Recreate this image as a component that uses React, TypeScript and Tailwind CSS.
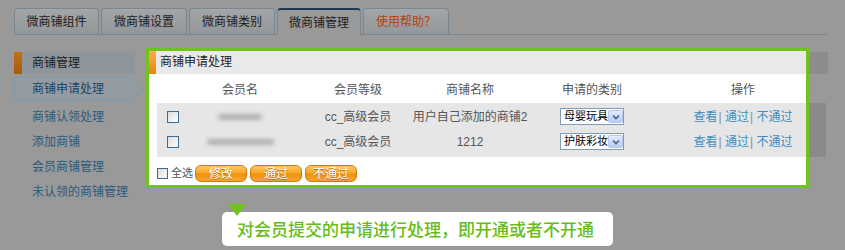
import React from "react";

const tabs = ["微商铺组件", "微商铺设置", "微商铺类别", "微商铺管理", "使用帮助？"];
const sideItems = ["商铺认领处理", "添加商铺", "会员商铺管理", "未认领的商铺管理"];

const rows = [
    { blur: "w-[44px]", level: "cc_高级会员", shop: "用户自己添加的商铺2", cat: "母婴玩具" },
    { blur: "w-[67px]", level: "cc_高级会员", shop: "1212", cat: "护肤彩妆" },
];

function Checkbox({ size = "w-[12px] h-[12px]" }: { size?: string }) {
    return (
        <span
            className={`${size} block border border-[#3f6b93] bg-[linear-gradient(135deg,#dcdcdc,#ffffff)]`}
        />
    );
}

function Select({ label }: { label: string }) {
    return (
        <div className="w-[64px] h-[17px] border border-[#7f9db9] bg-white flex items-center justify-between">
            <span className="pl-[3px] text-[11px] leading-none text-black whitespace-nowrap">{label}</span>
            <span className="w-[15px] h-[13px] mr-[1px] shrink-0 rounded-[2px] border border-[#b6c7ee] bg-[linear-gradient(to_bottom,#e3ebfd,#b9cbf4)] flex items-center justify-center">
                <svg width="8" height="6" viewBox="0 0 8 6">
                    <path d="M1 1.5 L4 4.5 L7 1.5" fill="none" stroke="#4a5f86" strokeWidth="1.6" />
                </svg>
            </span>
        </div>
    );
}

function OrangeButton({ label }: { label: string }) {
    return (
        <button className="w-[52px] h-[17px] rounded-[6px] border border-[#cd7b08] bg-[linear-gradient(to_bottom,#fdc868,#f6a623_48%,#ef900c_52%,#f5a733)] text-white text-[12px] leading-none [text-shadow:0_1px_0_#c46d00]">
            {label}
        </button>
    );
}

export default function App() {
    return (
        <div className="w-[845px] h-[250px] bg-[#999999] overflow-hidden font-['Liberation_Sans','Noto_Sans_CJK_SC',sans-serif]">
            {/* Tabs */}
            <div className="pt-[8px] ml-[14px] mr-[18px] flex items-end border-b border-[#7b8790]">
                {tabs.map((t, i) => {
                    const active = i === 3;
                    return (
                        <div
                            key={t}
                            className={
                                active
                                    ? "w-[84px] h-[27px] -mb-px mr-[2px] rounded-t-[4px] border-x border-[#7b8790] border-t-2 border-t-[#1d3652] bg-[#999999] flex items-center justify-center text-[12px] text-[#1c1c1c]"
                                    : `${i === 0 ? "w-[85px]" : "w-[86px]"} h-[26px] mr-[2px] rounded-t-[4px] border border-b-0 border-[#7b8790] bg-[linear-gradient(to_bottom,#a2a6a9,#93979a)] flex items-center justify-center text-[12px] ${i === 4 ? "text-[#b2440c]" : "text-[#1c1c1c]"}`
                            }
                        >
                            {t}
                        </div>
                    );
                })}
            </div>

            {/* Main area */}
            <div className="mt-[13px] flex">
                {/* Sidebar */}
                <div className="w-[146px] pl-[14px] pt-[4px] shrink-0">
                    <div className="w-[121px] h-[22px] flex bg-[#8e969b]">
                        <span className="w-[8px] bg-[linear-gradient(to_bottom,#c07215,#a9590b)]" />
                        <span className="pl-[10px] text-[12px] leading-[22px] text-[#1a1a1a]">商铺管理</span>
                    </div>
                    <div className="relative mt-[3px] w-[130px] h-[24px] flex items-center">
                        <svg className="absolute inset-0" width="130" height="24" viewBox="0 0 130 24">
                            <path d="M0.5 0.5 H116 L128.5 12 L116 23.5 H0.5 Z" fill="#959ca1" stroke="#7e98a8" />
                        </svg>
                        <span className="relative pl-[18px] text-[12px] text-[#1b4467]">商铺申请处理</span>
                    </div>
                    <div className="mt-[3px]">
                        {sideItems.map((s) => (
                            <div key={s} className="h-[25px] pl-[18px] flex items-center text-[12px] text-[#2b5b7b]">
                                {s}
                            </div>
                        ))}
                    </div>
                </div>

                {/* Highlighted panel */}
                <div className="relative shrink-0">
                    <div className="w-[663px] h-[140px] border-[3px] border-[#6fc31a] bg-white overflow-hidden">
                        <div className="h-[23px] flex bg-[#e9e9e9]">
                            <span className="w-[7px] bg-[linear-gradient(to_bottom,#f9b04a,#e8840e)]" />
                            <span className="pl-[4px] text-[12px] leading-[23px] text-[#222]">商铺申请处理</span>
                        </div>

                        <div className="w-[668px] ml-[8px]">
                            <div className="h-[29px] pb-[4px] grid grid-cols-[24px_118px_118px_106px_138px_164px] items-end text-[12px] text-[#555] text-center">
                                <span />
                                <span>会员名</span>
                                <span>会员等级</span>
                                <span>商铺名称</span>
                                <span>申请的类别</span>
                                <span>操作</span>
                            </div>

                            <div className="h-[54px] pt-[1px] bg-[#e6e6e6]">
                                {rows.map((r, i) => (
                                    <div
                                        key={i}
                                        className="h-[25px] grid grid-cols-[24px_118px_118px_106px_138px_164px] items-center text-[12px] text-[#555]"
                                    >
                                        <span className="pl-[10px]">
                                            <Checkbox />
                                        </span>
                                        <span className="flex justify-center">
                                            <span className={`${r.blur} h-[6px] rounded-full bg-[#b0b0b0] blur-[2px]`} />
                                        </span>
                                        <span className="flex justify-center whitespace-nowrap">{r.level}</span>
                                        <span className="flex justify-center whitespace-nowrap">{r.shop}</span>
                                        <span className="flex justify-center">
                                            <Select label={r.cat} />
                                        </span>
                                        <span className="flex justify-center whitespace-nowrap text-[#3a8dc6]">
                                            查看<span className="text-[#8c8c8c] pl-[1px]">|</span>&nbsp;通过
                                            <span className="text-[#8c8c8c] pl-[1px]">|</span>&nbsp;不通过
                                        </span>
                                    </div>
                                ))}
                            </div>

                            <div className="pt-[8px] flex items-center">
                                <Checkbox size="w-[11px] h-[11px]" />
                                <span className="ml-[3px] mr-[2px] text-[11px] leading-none text-[#555]">全选</span>
                                <div className="flex gap-[3px]">
                                    <OrangeButton label="修改" />
                                    <OrangeButton label="通过" />
                                    <OrangeButton label="不通过" />
                                </div>
                            </div>
                        </div>
                    </div>
                    {/* pointer */}
                    <span className="absolute left-[82px] top-full w-0 h-0 border-l-[9px] border-r-[9px] border-t-[12px] border-l-transparent border-r-transparent border-t-[#6fc31a] z-10" />
                </div>

                {/* dimmed continuation of the panel */}
                <div className="shrink-0">
                    <div className="mt-[4px] w-[19px] h-[22px] bg-[#8c8c8c]" />
                    <div className="mt-[29px] w-[17px] h-[54px] bg-[#8a8a8a]" />
                </div>
            </div>

            {/* Tooltip */}
            <div className="mt-[8px] ml-[222px] w-[391px] h-[34px] rounded-[5px] bg-white flex items-center pl-[15px] text-[17px] font-medium text-[#66bd17] font-['Noto_Sans_CJK_SC',sans-serif]">
                对会员提交的申请进行处理，即开通或者不开通
            </div>
        </div>
    );
}
